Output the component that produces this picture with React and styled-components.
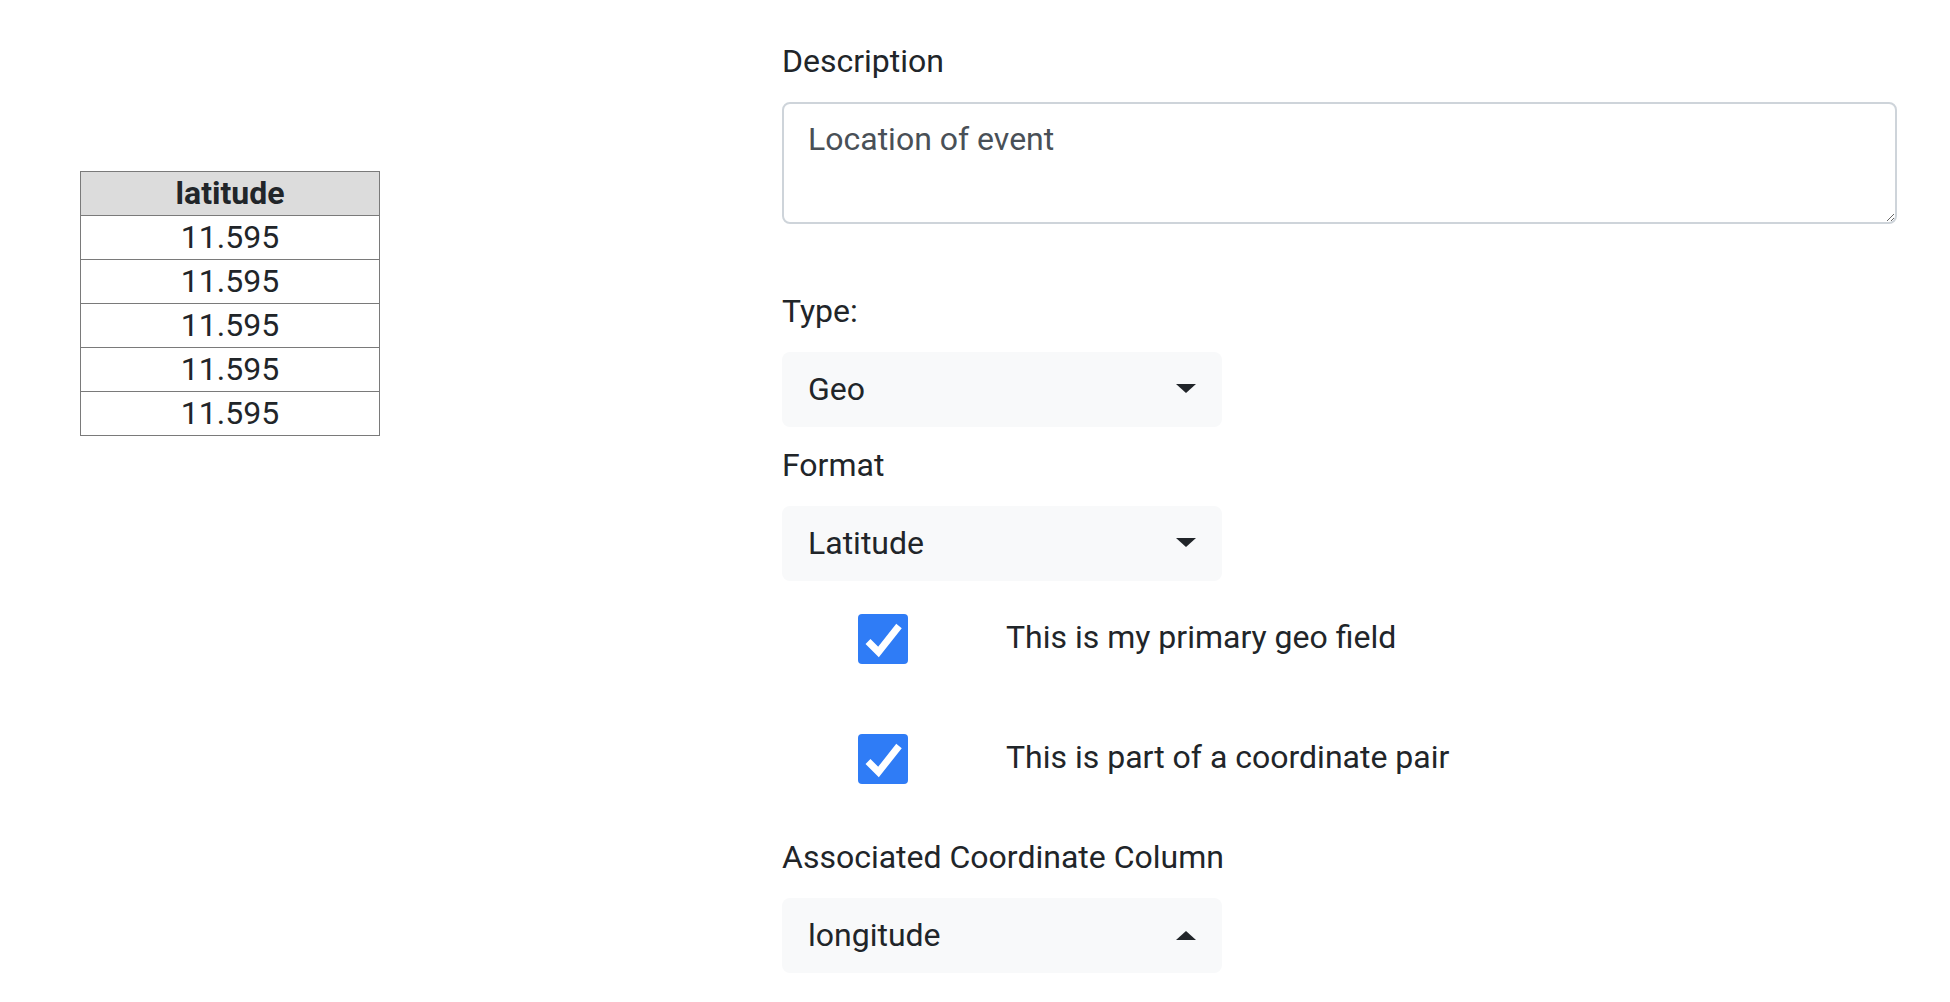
import React from 'react';
import styled, {createGlobalStyle} from 'styled-components';

const GlobalStyle = createGlobalStyle`
  html, body {
    margin: 0;
    padding: 0;
    background: #fff;
  }
  body {
    font-family: Roboto, "Liberation Sans", Arial, sans-serif;
    color: #212529;
  }
`;

const rows = ['11.595', '11.595', '11.595', '11.595', '11.595'];

const Caret = ({up}) => (
  <CaretIcon width="20" height="10" viewBox="0 0 20 10" up={up ? 1 : 0}>
    <path d="M0 0 L20 0 L10 9 Z" fill="#212529"/>
  </CaretIcon>
);

const Check = ({label}) => (
  <CheckRow>
    <Box>
      <svg width="50" height="50" viewBox="0 0 50 50">
        <path d="M10 27.5 L20.5 38 L41 12" fill="none" stroke="#fff" strokeWidth="7" strokeLinejoin="miter"/>
      </svg>
    </Box>
    <CheckText>{label}</CheckText>
  </CheckRow>
);

export default () => {
  return (
    <Page>
      <GlobalStyle/>
      <Preview>
        <Table>
          <thead>
            <tr><Th>latitude</Th></tr>
          </thead>
          <tbody>
            {rows.map((r, i) => <tr key={i}><Td>{r}</Td></tr>)}
          </tbody>
        </Table>
      </Preview>
      <Form>
        <Label>Description</Label>
        <TextArea defaultValue="Location of event"/>

        <Label top={65}>Type:</Label>
        <Select>
          <span>Geo</span>
          <Caret/>
        </Select>

        <Label top={16}>Format</Label>
        <Select>
          <span>Latitude</span>
          <Caret/>
        </Select>

        <Checks>
          <Check label="This is my primary geo field"/>
          <Check label="This is part of a coordinate pair"/>
        </Checks>

        <Label top={51}>Associated Coordinate Column</Label>
        <Select>
          <span>longitude</span>
          <Caret up/>
        </Select>
      </Form>
    </Page>
  )
}

const Page = styled.div`
    display: grid;
    grid-template-columns: 782px 1115px;
    min-height: 1002px;
  `;

const Preview = styled.div`
    padding: 171px 0 0 80px;
  `;

const Table = styled.table`
    border-collapse: collapse;
    width: 300px;
    font-size: 32px;
    color: #212529;
  `;

const Th = styled.th`
    border: 1px solid #7a7a7a;
    background-color: #dcdcdc;
    font-weight: 700;
    height: 43px;
    line-height: 43px;
    padding: 0;
    text-align: center;
  `;

const Td = styled.td`
    border: 1px solid #7a7a7a;
    height: 43px;
    line-height: 43px;
    padding: 0;
    text-align: center;
  `;

const Form = styled.div`
    display: flex;
    flex-direction: column;
    padding-top: 39px;
  `;

const Label = styled.label`
    font-size: 32px;
    line-height: 44px;
    margin-top: ${props => props.top || 0}px;
    margin-bottom: 19px;
  `;

const TextArea = styled.textarea`
    box-sizing: border-box;
    width: 100%;
    height: 122px;
    border: 2px solid #ced4da;
    border-radius: 8px;
    padding: 11px 24px 8px;
    font-family: Roboto, "Liberation Sans", Arial, sans-serif;
    font-size: 32px;
    line-height: 48px;
    color: #495057;
    resize: vertical;
    outline: none;
  `;

const Select = styled.div`
    box-sizing: border-box;
    display: flex;
    align-items: center;
    justify-content: space-between;
    width: 440px;
    height: 75px;
    padding: 0 26px 2px 26px;
    border-radius: 8px;
    background-color: #f8f9fa;
    font-size: 32px;
    line-height: 48px;
  `;

const CaretIcon = styled.svg`
    display: block;
    transform: ${props => props.up ? 'rotate(180deg)' : 'none'};
  `;

const Checks = styled.div`
    display: flex;
    flex-direction: column;
    gap: 70px;
    margin-top: 33px;
  `;

const CheckRow = styled.div`
    display: flex;
    align-items: center;
    height: 50px;
    padding-left: 76px;
  `;

const Box = styled.div`
    width: 50px;
    height: 50px;
    border-radius: 4px;
    background-color: #2f7cf6;
    flex-shrink: 0;
    
    svg {
      display: block;
    }
  `;

const CheckText = styled.span`
    margin-left: 98px;
    padding-bottom: 4px;
    font-size: 32px;
    line-height: 48px;
  `;
